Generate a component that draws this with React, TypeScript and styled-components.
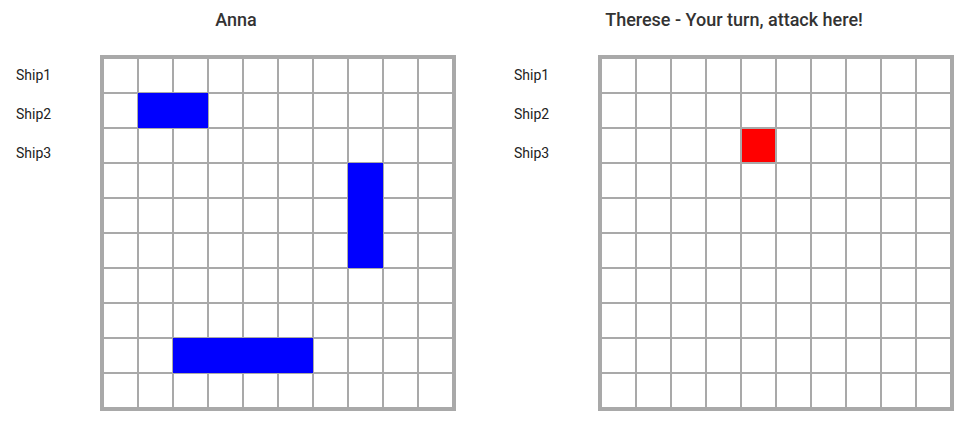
import styled, { createGlobalStyle } from 'styled-components';

const GlobalStyle = createGlobalStyle`
  body {
    margin: 0;
    background: #ffffff;
    font-family: Roboto, "Liberation Sans", sans-serif;
  }
`;

type CellState = 'empty' | 'ship' | 'hit';

interface Player {
  namn: string;
  rubrik: string;
  skepp: string[];
  rutor: Record<string, CellState>;
}

const Sida = styled.div`
  display: flex;
  gap: 26px;
  padding-top: 9px;
`;

const Sektion = styled.section`
  width: 472px;
  padding: 0 16px;
  box-sizing: border-box;
  display: flex;
  flex-direction: column;
`;

const Rubrik = styled.h2`
  margin: 0 0 25px;
  font-size: 18px;
  line-height: 21px;
  font-weight: 500;
  color: #333333;
  text-align: center;
`;

const Rad = styled.div`
  display: flex;
`;

const SkeppLista = styled.div`
  width: 84px;
  display: flex;
  flex-direction: column;
`;

const SkeppNamn = styled.div`
  height: 39px;
  line-height: 40px;
  font-size: 14px;
  color: #222222;
`;

const Bräde = styled.div`
  display: grid;
  grid-template-columns: repeat(10, 35px);
  grid-auto-rows: 35px;
  border: 3px solid #a9a9a9;
`;

const Ruta = styled.div<{ $state: CellState }>`
  box-sizing: border-box;
  border: 1px solid ${(p) => (p.$state === 'ship' ? '#0000ff' : '#a9a9a9')};
  background: ${(p) =>
    p.$state === 'ship' ? '#0000ff' : p.$state === 'hit' ? '#ff0000' : '#ffffff'};
`;

const markera = (celler: [number, number][], state: CellState) => {
  const ut: Record<string, CellState> = {};
  celler.forEach(([r, c]) => {
    ut[`${r}-${c}`] = state;
  });
  return ut;
};

const spelare: Player[] = [
  {
    namn: 'anna',
    rubrik: 'Anna',
    skepp: ['Ship1', 'Ship2', 'Ship3'],
    rutor: markera(
      [
        [1, 1], [1, 2],
        [3, 7], [4, 7], [5, 7],
        [8, 2], [8, 3], [8, 4], [8, 5],
      ],
      'ship'
    ),
  },
  {
    namn: 'therese',
    rubrik: 'Therese - Your turn, attack here!',
    skepp: ['Ship1', 'Ship2', 'Ship3'],
    rutor: markera([[2, 4]], 'hit'),
  },
];

const Spelplan = ({ rutor }: { rutor: Record<string, CellState> }) => {
  const celler = [];
  for (let r = 0; r < 10; r++) {
    for (let c = 0; c < 10; c++) {
      celler.push(<Ruta key={`${r}-${c}`} $state={rutor[`${r}-${c}`] || 'empty'} />);
    }
  }
  return <Bräde>{celler}</Bräde>;
};

export default function App() {
  return (
    <>
      <GlobalStyle />
      <Sida>
        {spelare.map((p) => (
          <Sektion key={p.namn}>
            <Rubrik>{p.rubrik}</Rubrik>
            <Rad>
              <SkeppLista>
                {p.skepp.map((s) => (
                  <SkeppNamn key={s}>{s}</SkeppNamn>
                ))}
              </SkeppLista>
              <Spelplan rutor={p.rutor} />
            </Rad>
          </Sektion>
        ))}
      </Sida>
    </>
  );
}
